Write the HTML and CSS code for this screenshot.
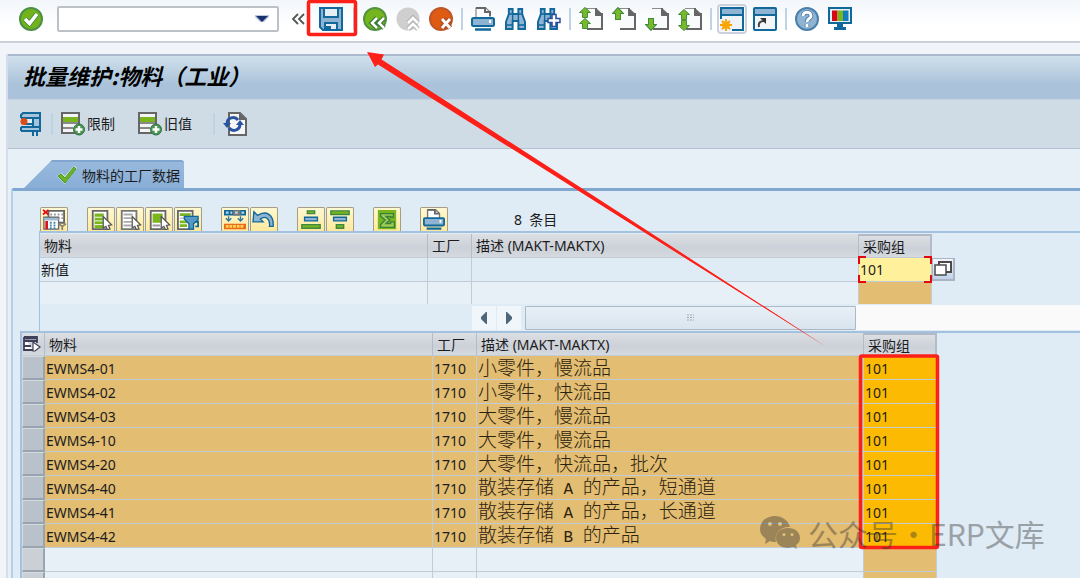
FILE: index.html
```html
<!DOCTYPE html>
<html lang="zh-CN">
<head>
<meta charset="utf-8">
<title>批量维护:物料（工业）</title>
<link rel="stylesheet" href="styles.css">
</head>
<body>
<svg class="defs" aria-hidden="true">
  <defs>
    <symbol id="page" viewBox="0 0 24 24"><path d="M8 1.500H18L23 7V22H8" fill="#f8fafb"/><path d="M7 1.500H17.500" stroke="#8c8c8c" fill="none"/><path d="M17 1V7H23V22H8" stroke="#666" stroke-width="2" fill="none"/><path d="M17 1L23.500 7V9H16Z" fill="#666"/></symbol>
    <symbol id="up" viewBox="0 0 12 12" preserveAspectRatio="none"><path d="M6 .5L11.500 6H8.500V11.500H3.500V6H.5Z" fill="#78b82a" stroke="#3f8b3a"/></symbol>
    <symbol id="down" viewBox="0 0 12 12" preserveAspectRatio="none"><path d="M6 11.500L11.500 6H8.500V.5H3.500V6H.5Z" fill="#78b82a" stroke="#3f8b3a"/></symbol>
    <symbol id="bino" viewBox="0 0 22 24" preserveAspectRatio="none"><path d="M4 2H8V7H14V2H18V7L21 15V22H14V14H8V22H1V15L4 7Z" fill="#8eb3d3" stroke="#11689b" stroke-width="2"/><path d="M4 7H8V14M18 7H14V14M1 18H8M14 18H21" fill="none" stroke="#11689b" stroke-width="1.500"/></symbol>
    <symbol id="sheetadd" viewBox="0 0 24 24"><path d="M1 1H18V21H1Z" fill="#f2f4f5" stroke="#666" stroke-width="2"/><path d="M2 5H17V10H2Z" fill="#7ab51d"/><path d="M1 11H18M1 16H12" stroke="#666" stroke-width="1.500"/><circle cx="18" cy="17.500" r="5.500" fill="#4b9350" stroke="#2f7346"/><path d="M18 14V21M14.500 17.500H21.500" stroke="#fff" stroke-width="2.500"/></symbol>
    <symbol id="cursor" viewBox="0 0 10 14"><path d="M1 1L9 9L6 9.500L7.500 13L5 13.500L3.500 10.500L1 12Z" fill="#fff" stroke="#555" stroke-width="1.200"/></symbol>
  </defs>
</svg>

<header class="command-bar">
  <button class="icon-button" aria-label="确认"><svg viewBox="0 0 24 24"><circle cx="12" cy="12" r="11" fill="#72b31d" stroke="#4b9045" stroke-width="2"/><path d="M6 12L10.500 16.500L18 7" fill="none" stroke="#3c8038" stroke-width="5"/><path d="M6 12L10.500 16.500L18 7" fill="none" stroke="#fff" stroke-width="3.500"/></svg></button>
  <div class="command-field">
    <input type="text" aria-label="命令">
    <button aria-label="命令列表"><svg viewBox="0 0 14 8"><path d="M0 0H14V2L9 7H5L0 2Z" fill="#b9c8dc"/><path d="M1 1H13L7 7Z" fill="#18306d"/></svg></button>
  </div>
  <button class="collapse" aria-label="折叠"><svg viewBox="0 0 14 12"><path d="M7 1L2 6L7 11M13 1L8 6L13 11" fill="none" stroke="#555" stroke-width="1.800"/></svg></button>
  <button class="icon-button save" aria-label="保存"><svg viewBox="0 0 24 24"><path d="M1 1H23V23H4L1 20Z" fill="#8eb3d3" stroke="#11689b" stroke-width="2"/><path d="M5 1H19V10H5Z" fill="#e5edf5" stroke="#11689b" stroke-width="2"/><path d="M6 16H18V23H6Z" fill="#e5edf5" stroke="#11689b" stroke-width="2"/><path d="M7 19H12V22H7Z" fill="#11689b"/></svg></button>
  <span class="separator"></span>
  <div class="icon-group">
    <button class="icon-button" aria-label="返回"><svg viewBox="0 0 24 24"><circle cx="12" cy="12" r="11" fill="#75b51e" stroke="#51933f" stroke-width="2"/><path d="M14 11L9 16L14 21M21 11L16 16L21 21" fill="none" stroke="#357c35" stroke-width="5"/><path d="M14 11L9 16L14 21M21 11L16 16L21 21" fill="none" stroke="#fff" stroke-width="2.500"/></svg></button>
    <button class="icon-button" aria-label="退出"><svg viewBox="0 0 24 24"><circle cx="12" cy="12" r="11.500" fill="#cfcfcf"/><path d="M12 16L17 11L22 16M12 22L17 17L22 22" fill="none" stroke="#b5b5b5" stroke-width="5"/><path d="M12 16L17 11L22 16M12 22L17 17L22 22" fill="none" stroke="#fff" stroke-width="2.500"/></svg></button>
    <button class="icon-button" aria-label="取消"><svg viewBox="0 0 24 24"><circle cx="12" cy="12" r="11" fill="#df5a13" stroke="#bd5728" stroke-width="2"/><path d="M13 12L21 21M21 12L13 21" stroke="#a9451f" stroke-width="5.500"/><path d="M13 12L21 21M21 12L13 21" stroke="#fff" stroke-width="3"/></svg></button>
  </div>
  <span class="separator"></span>
  <div class="icon-group">
    <button class="icon-button" aria-label="打印"><svg viewBox="0 0 24 24"><path d="M5 10V1H15L19 5V10" fill="#f8fafb" stroke="#888" stroke-width="1.200"/><path d="M5 1H14V5H19V9" fill="none" stroke="#666" stroke-width="2"/><rect x="1" y="11" width="22" height="8" rx="1.500" fill="#8eb3d3" stroke="#11689b" stroke-width="2"/><path d="M18 13H20V16H18Z" fill="#fff"/><path d="M4 22.500H20" stroke="#11689b" stroke-width="2.500"/></svg></button>
    <button class="icon-button" aria-label="查找"><svg viewBox="0 0 24 24"><use href="#bino" x="1" width="21" height="24"/></svg></button>
    <button class="icon-button" aria-label="继续查找"><svg viewBox="0 0 24 24"><use href="#bino" width="21" height="24"/><path d="M15 7.500H19V11.500H23V15.500H19V19.500H15V15.500H11V11.500H15Z" fill="#fff" stroke="#2c4c9b" stroke-width="1.500"/></svg></button>
  </div>
  <span class="separator"></span>
  <div class="icon-group">
    <button class="icon-button" aria-label="第一页"><svg viewBox="0 0 24 24"><use href="#page" width="24" height="24"/><use href="#up" width="12" height="11"/><use href="#up" y="11" width="12" height="11"/></svg></button>
    <button class="icon-button" aria-label="上一页"><svg viewBox="0 0 24 24"><use href="#page" width="24" height="24"/><use href="#up" width="12" height="13"/></svg></button>
    <button class="icon-button" aria-label="下一页"><svg viewBox="0 0 24 24"><use href="#page" width="24" height="24"/><use href="#down" y="11" width="12" height="13"/></svg></button>
    <button class="icon-button" aria-label="最后一页"><svg viewBox="0 0 24 24"><use href="#page" width="24" height="24"/><use href="#up" y="2" width="12" height="11"/><use href="#down" y="13" width="12" height="11"/></svg></button>
  </div>
  <span class="separator"></span>
  <div class="icon-group">
    <button class="icon-button active" aria-label="新建会话"><svg viewBox="0 0 24 24"><rect x="1" y="1" width="22" height="22" fill="#eef3f8" stroke="#11689b" stroke-width="2"/><path d="M2 2H22V7H2Z" fill="#8eb3d3"/><path d="M1 8H23" stroke="#11689b" stroke-width="2"/><path d="M0 12H12V24H0Z" fill="#eef3f8"/><path d="M6 12V24M0 18H12M2 14L10 22M10 14L2 22" stroke="#f6a000" stroke-width="1.800"/><circle cx="6" cy="18" r="3.700" fill="#fca600"/></svg></button>
    <button class="icon-button" aria-label="创建快捷方式"><svg viewBox="0 0 24 24"><rect x="1" y="1" width="22" height="22" rx="1" fill="#f4f5f6" stroke="#11689b" stroke-width="2"/><path d="M2 2H22V7H2Z" fill="#8eb3d3"/><path d="M1 8H23" stroke="#11689b" stroke-width="2"/><path d="M6 20C5 16 7 14 11 14" fill="none" stroke="#444" stroke-width="2"/><path d="M7 11H13V17Z" fill="#333"/></svg></button>
  </div>
  <span class="separator"></span>
  <div class="icon-group">
    <button class="icon-button" aria-label="帮助"><svg viewBox="0 0 24 24"><circle cx="12" cy="12" r="11" fill="#8eb3d3" stroke="#4b80aa" stroke-width="2"/><path d="M8 9C8 4 16 4 16 9C16 12 12 11 12 15M12 17V20" fill="none" stroke="#4b80aa" stroke-width="4.500"/><path d="M8 9C8 4 16 4 16 9C16 12 12 11 12 15M12 17V20" fill="none" stroke="#fff" stroke-width="2.800"/></svg></button>
    <button class="icon-button" aria-label="布局菜单"><svg viewBox="0 0 24 24"><rect x="1" y="1" width="22" height="15" fill="#e5f0f6" stroke="#11689b" stroke-width="2"/><path d="M4 3.500H9.500V14H4Z" fill="#d60a12"/><path d="M9.500 3.500H15V14H9.500Z" fill="#7ab51d"/><path d="M15 3.500H20.500V14H15Z" fill="#137ebd"/><path d="M9 17H15V20H18V23H6V20H9Z" fill="#11689b"/></svg></button>
  </div>
</header>

<main class="window">
  <h1 class="title">批量维护:物料（工业）</h1>

  <div class="app-bar">
    <button class="icon-button" aria-label="批量维护"><svg viewBox="0 0 24 24"><path d="M2 3L4 1H21V19H2V15H14V5H2Z" fill="#a5c3dd"/><path d="M6 6H13V12H6Z" fill="#e5eef5"/><path d="M2 6V3L4 1H21V19M14 6V14M2 6H21M5 12H14M2 15H21M2 19H21V15M2 15V19M14 19V24M18 19V24" fill="none" stroke="#11689b" stroke-width="2"/><circle cx="5" cy="9.500" r="3.500" fill="#df4b16"/></svg></button>
    <span class="separator"></span>
    <button class="text-button"><svg viewBox="0 0 24 24"><use href="#sheetadd"/></svg>限制</button>
    <button class="text-button"><svg viewBox="0 0 24 24"><use href="#sheetadd"/></svg>旧值</button>
    <span class="separator"></span>
    <button class="icon-button" aria-label="刷新"><svg viewBox="0 0 24 24"><path d="M6 1H17L23 7V23H6Z" fill="#f4f6f7" stroke="#666" stroke-width="2"/><path d="M16 0V8H24Z" fill="#666"/><path d="M4 12C4 5 12 4 15 8M17 12C17 19 9 20 6 16" fill="none" stroke="#2853a0" stroke-width="3"/><path d="M0 11H8L4 16ZM13 13H21L17 8Z" fill="#2853a0"/></svg></button>
  </div>

  <div class="tabs" role="tablist">
    <button class="tab" role="tab" aria-selected="true"><svg viewBox="0 0 20 18"><path d="M0 10L4 7L8 10L17 0L20 2L8 18Z" fill="#dce8c9"/><path d="M1 10L4 8L8 12L17 1L19 3L8 17Z" fill="#6ab520" stroke="#489636"/></svg>物料的工厂数据</button>
  </div>

  <section class="pane">
    <div class="grid-bar">
      <div class="tool-group">
        <button class="tool" aria-label="显示字段"><svg viewBox="0 0 28 24"><path d="M8 2H25V15H8Z" fill="#fff" stroke="#666" stroke-width="2"/><path d="M10 6H24M10 10H24" stroke="#999" stroke-width="2" stroke-dasharray="2 2"/><path d="M2 1L8 6M8 1L2 6" stroke="#e30d13" stroke-width="2"/><path d="M3 9H19V22H3Z" fill="#fff" stroke="#666" stroke-width="1.500"/><path d="M3 11H19" stroke="#9ebbd0" stroke-width="3"/><path d="M6 13V22" stroke="#d9141a" stroke-width="3"/><path d="M10.500 14V22M14.500 14V22" stroke="#3c83ad" stroke-width="2" stroke-dasharray="2 1"/><path d="M19 16L23 19L27 16M23 18V23" fill="none" stroke="#8a8570" stroke-width="2"/></svg></button>
      </div>
      <div class="tool-group">
        <button class="tool" aria-label="全选"><svg viewBox="0 0 28 24"><path d="M5 2H21V22H5Z" fill="#fff" stroke="#666" stroke-width="2"/><path d="M7 5H17V21H7Z" fill="#7ab51d"/><path d="M7 9H19M7 13H19M7 17H19" stroke="#fff"/><use href="#cursor" x="15" y="7" width="12" height="16"/></svg></button>
        <button class="tool" aria-label="取消全选"><svg viewBox="0 0 28 24"><path d="M5 2H21V22H5Z" fill="#fff" stroke="#777" stroke-width="2"/><path d="M7 6H17M7 10H16M7 14H16M7 18H16" stroke="#aaa" stroke-width="2"/><use href="#cursor" x="15" y="7" width="12" height="16"/></svg></button>
        <button class="tool" aria-label="选择块"><svg viewBox="0 0 28 24"><path d="M5 2H21V22H5Z" fill="#fff" stroke="#666" stroke-width="2"/><path d="M7 5H18V15H7Z" fill="#7ab51d"/><path d="M7 18H15" stroke="#999" stroke-width="2"/><use href="#cursor" x="15" y="7" width="12" height="16"/></svg></button>
        <button class="tool" aria-label="过滤"><svg viewBox="0 0 28 24"><path d="M3 2H19V22H3Z" fill="#fff" stroke="#666" stroke-width="2"/><path d="M5 6H17M5 14H13M5 18H13" stroke="#7ab51d" stroke-width="3"/><path d="M5 10H13" stroke="#999"/><path d="M10 8H25V12L20 16V22H15V16L10 11Z" fill="#5898c4" stroke="#11689b" stroke-width="1.500"/><path d="M22 14H25V19H22" fill="none" stroke="#11689b" stroke-width="2"/></svg></button>
      </div>
      <div class="tool-group">
        <button class="tool" aria-label="交换"><svg viewBox="0 0 28 24"><path d="M2 1H26V7H2Z" fill="#11689b"/><path d="M12 1H20V7H12Z" fill="#777"/><path d="M4 4H7M9 4H11M14 4H17M21 4H24" stroke="#bcd2e3" stroke-width="2.500"/><path d="M7 8V13M4 10L7 13L10 10M20 8V13M17 10L20 13L23 10" stroke="#33789f" stroke-width="1.500" fill="none"/><path d="M2 16H26V22H2Z" fill="#e96a20"/><path d="M4 19H24" stroke="#ffd74e" stroke-width="3" stroke-dasharray="3 1"/></svg></button>
        <button class="tool" aria-label="撤销"><svg viewBox="0 0 28 24"><path d="M3 3L7 7C16 1 25 6 24 19H20C21 10 15 7 10 11L13 14H2Z" fill="#8eb3d3" stroke="#11689b" stroke-width="1.500"/></svg></button>
      </div>
      <div class="tool-group">
        <button class="tool" aria-label="升序"><svg viewBox="0 0 28 24"><path d="M10 2H18V5H10ZM4 17H24V21H4Z" fill="#7ab51d" stroke="#3f8744" stroke-width="1.500"/><path d="M7 9H21V13H7Z" fill="#8eb3d3" stroke="#11689b" stroke-width="1.500"/></svg></button>
        <button class="tool" aria-label="降序"><svg viewBox="0 0 28 24"><path d="M4 2H24V6H4ZM10 17H18V21H10Z" fill="#7ab51d" stroke="#3f8744" stroke-width="1.500"/><path d="M7 9H21V13H7Z" fill="#8eb3d3" stroke="#11689b" stroke-width="1.500"/></svg></button>
      </div>
      <div class="tool-group">
        <button class="tool" aria-label="总计"><svg viewBox="0 0 28 24"><path d="M4 1H24V22H4Z" fill="#7ab51d"/><path d="M7 5H21V9H18V8H13L17 12L13 16H18V14H22V20H7V17L12 12L7 8Z" fill="#9fcb55" stroke="#35803b" stroke-width="1.500"/></svg></button>
      </div>
      <div class="tool-group">
        <button class="tool" aria-label="打印清单"><svg viewBox="0 0 28 24"><path d="M7 10V1H16L20 5V10" fill="#fff" stroke="#777" stroke-width="1.500"/><path d="M7 1H15V5H20" fill="none" stroke="#666" stroke-width="2"/><rect x="3" y="10" width="22" height="8" rx="1" fill="#8eb3d3" stroke="#11689b" stroke-width="2"/><path d="M20 12H22V15H20Z" fill="#fff"/><path d="M6 21.500H22" stroke="#11689b" stroke-width="2.500"/></svg></button>
      </div>
      <span class="count">8&nbsp; 条目</span>
    </div>

    <div class="new-values">
      <table class="grid">
        <colgroup><col class="c-material"><col class="c-plant"><col class="c-desc"><col class="c-group"></colgroup>
        <thead><tr><th>物料</th><th>工厂</th><th>描述 (MAKT-MAKTX)</th><th class="boxed">采购组</th></tr></thead>
        <tbody>
          <tr class="entry"><td>新值</td><td></td><td></td><td class="focus"><input type="text" value="101" aria-label="采购组新值"><button class="lookup" aria-label="搜索帮助"><svg viewBox="0 0 18 16"><path d="M5 1H17V11H5Z" fill="#fff" stroke="#4b4b4b" stroke-width="2"/><path d="M1 4H12V14H1Z" fill="#fff" stroke="#4b4b4b" stroke-width="1.500"/></svg></button></td></tr>
          <tr class="spare"><td></td><td></td><td></td><td class="tan"></td></tr>
        </tbody>
      </table>
      <div class="scroller">
        <button class="step" aria-label="向左滚动"><svg viewBox="0 0 8 12"><path d="M7 0V12H6L1 7V5L6 0Z" fill="#50677a"/></svg></button>
        <button class="step" aria-label="向右滚动"><svg viewBox="0 0 8 12"><path d="M1 0V12H2L7 7V5L2 0Z" fill="#50677a"/></svg></button>
        <div class="thumb"><svg viewBox="0 0 9 7"><path d="M1 1H8M1 3.500H8M1 6H8" stroke="#9aa9b7" stroke-dasharray="2 1"/></svg></div>
        <div class="track"></div>
      </div>
    </div>

    <div class="records">
      <table class="grid">
        <colgroup><col class="c-select"><col class="c-material"><col class="c-plant"><col class="c-desc"><col class="c-group"></colgroup>
        <thead><tr><th class="corner"><svg viewBox="0 0 18 16"><path d="M1 1H14V7M1 1V14H10M1 5H14M1 10H8" fill="#fff" stroke="#3d4058" stroke-width="1.800"/><path d="M1 2.500H14" stroke="#3d4058" stroke-width="2"/><path d="M10 6L17 11L12 15H10Z" fill="#fff" stroke="#3d4058" stroke-width="1.200"/></svg></th><th>物料</th><th>工厂</th><th>描述 (MAKT-MAKTX)</th><th class="boxed">采购组</th></tr></thead>
        <tbody>
          <tr><td class="selector"></td><td>EWMS4-01</td><td>1710</td><td class="desc">小零件，慢流品</td><td class="value">101</td></tr>
          <tr><td class="selector"></td><td>EWMS4-02</td><td>1710</td><td class="desc">小零件，快流品</td><td class="value">101</td></tr>
          <tr><td class="selector"></td><td>EWMS4-03</td><td>1710</td><td class="desc">大零件，慢流品</td><td class="value">101</td></tr>
          <tr><td class="selector"></td><td>EWMS4-10</td><td>1710</td><td class="desc">大零件，慢流品</td><td class="value">101</td></tr>
          <tr><td class="selector"></td><td>EWMS4-20</td><td>1710</td><td class="desc">大零件，快流品，批次</td><td class="value">101</td></tr>
          <tr><td class="selector"></td><td>EWMS4-40</td><td>1710</td><td class="desc">散装存储<span class="mono"> A </span>的产品，短通道</td><td class="value">101</td></tr>
          <tr><td class="selector"></td><td>EWMS4-41</td><td>1710</td><td class="desc">散装存储<span class="mono"> A </span>的产品，长通道</td><td class="value">101</td></tr>
          <tr><td class="selector"></td><td>EWMS4-42</td><td>1710</td><td class="desc">散装存储<span class="mono"> B </span>的产品</td><td class="value">101</td></tr>
          <tr class="blank"><td class="selector"></td><td></td><td></td><td></td><td class="tan"></td></tr>
          <tr class="blank"><td class="selector"></td><td></td><td></td><td></td><td class="tan"></td></tr>
        </tbody>
      </table>
    </div>
  </section>
</main>

<svg class="marks" viewBox="0 0 1080 578" aria-hidden="true">
  <rect x="308.500" y="1.500" width="47" height="33" rx="1.500" fill="none" stroke="#fd2019" stroke-width="3.500"/>
  <rect x="860.500" y="356" width="77" height="191.500" rx="1.500" fill="none" stroke="#fd2019" stroke-width="3.500"/>
  <path d="M367 52L384 54.500L381.500 59.500L600 200L825 346L598 203L379 63.500L375 67Z" fill="#fd2019"/>
  <path d="M380 59L825 346L378 64.500Z" fill="#fd2019"/>
</svg>

<div class="watermark">
  <svg viewBox="0 0 42 34"><path fill-rule="evenodd" d="M15 0C7 0 0 5 0 13C0 17 2 20 6 23L5 28L10 25C12 26 14 26 16 26C14 17 21 10 30 11C28 4 22 0 15 0ZM10 6A2 2 0 1 1 10 10A2 2 0 1 1 10 6ZM20 6A2 2 0 1 1 20 10A2 2 0 1 1 20 6Z"/><path fill-rule="evenodd" d="M28 12C21 12 16 16 16 22C16 28 21 32 28 32C30 32 32 31 33 31L37 33L36 29C39 27 40 25 40 22C40 16 35 12 28 12ZM24 17A1.600 1.600 0 1 1 24 20.200A1.600 1.600 0 1 1 24 17ZM32 17A1.600 1.600 0 1 1 32 20.200A1.600 1.600 0 1 1 32 17Z"/></svg>
  <span>公众号</span><span class="dot">·</span><span>ERP文库</span>
</div>
</body>
</html>
```
FILE: styles.css
```css
* { box-sizing: border-box; }

body {
  margin: 0;
  height: 100vh;
  overflow: hidden;
  position: relative;
  display: flex;
  flex-direction: column;
  background: #f1f5fa;
  color: #1c1c1c;
  font-family: "Noto Sans", "Noto Sans CJK SC", sans-serif;
  font-size: 14px;
}

button, input {
  margin: 0;
  padding: 0;
  border: 0;
  background: none;
  color: inherit;
  font: inherit;
}

svg { display: block; }
.defs { position: absolute; width: 0; height: 0; }

.icon-button { width: 24px; height: 24px; flex: none; }
.icon-button svg { width: 24px; height: 24px; }
.separator { width: 2px; height: 22px; margin: 0 8px; background: #bfd3e6; flex: none; }

/* Command bar */
.command-bar {
  flex: none;
  display: flex;
  align-items: center;
  height: 43px;
  padding: 0 19px 4px;
  border-bottom: 2px solid #cbcedb;
  background: linear-gradient(#f2f6fa, #fff 60%);
}
.command-field {
  display: flex;
  align-items: center;
  width: 222px;
  height: 26px;
  margin-left: 14px;
  border: 2px solid #bcc1c8;
  border-radius: 2px;
  background: #fff;
}
.command-field input { flex: 1; min-width: 0; height: 22px; }
.command-field button { width: 26px; }
.command-field svg { width: 14px; height: 8px; margin: 0 4px; }
.collapse { margin: 0 12px; }
.collapse svg { width: 14px; height: 12px; }
.save { width: 28px; }
.save svg { margin: 0 auto; }
.icon-group { display: flex; gap: 9px; }
.active { background: #f1f4f9; outline: 2px solid #cdd1df; outline-offset: 1px; border-radius: 1px; }

/* Window */
.window {
  flex: 1;
  display: flex;
  flex-direction: column;
  min-height: 0;
  margin-top: 11px;
  margin-left: 6px;
  border-left: 2px solid #d5deeb;
  background: #e8f0f7;
}
.title {
  flex: none;
  margin: 0;
  height: 45px;
  padding-left: 15px;
  border-top: 2px solid #aab9ce;
  background: linear-gradient(#d0e0ec, #abc3da 65%, #abc3da);
  font-family: "Noto Sans CJK SC", sans-serif;
  font-size: 22px;
  font-style: italic;
  font-weight: 700;
  line-height: 38px;
  color: #000;
}
.app-bar {
  flex: none;
  display: flex;
  align-items: center;
  height: 50px;
  padding-left: 11px;
  border-top: 1px solid #c5d2df;
  border-bottom: 1px solid #b3c3d1;
  background: #cfdce6;
}
.text-button { display: flex; align-items: center; gap: 2px; margin-right: 23px; line-height: 20px; }
.text-button svg { width: 24px; height: 24px; }
.text-button + .separator { margin-left: -2px; }

.tabs { flex: none; display: flex; align-items: flex-end; height: 39px; padding-left: 16px; }
.tab {
  display: flex;
  align-items: center;
  gap: 5px;
  height: 28px;
  padding: 0 4px 0 33px;
  border-top: 2px solid #80a6cf;
  border-radius: 0 3px 0 0;
  background: linear-gradient(#98b9dc, #88aed7);
  clip-path: polygon(28px 0, 100% 0, 100% 100%, 0 100%);
}
.tab svg { width: 20px; height: 18px; }

.pane {
  flex: 1;
  min-height: 0;
  margin-left: 3px;
  padding-left: 7px;
  border-top: 3px solid #7fa7d0;
  border-left: 2px solid #b5cfe6;
  border-radius: 3px 0 0 0;
  background: #dfebf5;
}

/* Grid toolbar */
.grid-bar { display: flex; align-items: flex-end; gap: 19px; height: 40px; padding-left: 20px; }
.tool-group { display: flex; gap: 1px; }
.tool {
  width: 28px;
  height: 24px;
  overflow: hidden;
  border: 1px solid #a59e85;
  border-bottom: 0;
  border-radius: 2px 2px 0 0;
  background: linear-gradient(#fff8d2, #ffe99b);
}
.tool svg { width: 26px; height: 22px; }
.count { margin-left: 47px; line-height: 22px; }

/* Tables */
.grid { width: min-content; border-spacing: 0; table-layout: fixed; line-height: 20px; }
.c-select { width: 23px; }
.c-material { width: 388px; }
.c-plant { width: 44px; }
.c-desc { width: 387px; }
.c-group { width: 73px; }
.grid th, .grid td {
  height: 24px;
  padding: 0 0 0 1px;
  border-right: 1px solid #c2ccd7;
  border-bottom: 1px solid #c2ccd7;
  text-align: left;
  font-weight: 400;
  white-space: nowrap;
}
.grid th {
  padding-left: 4px;
  border-right-color: #b3bcc8;
  background: linear-gradient(#dce0e3, #ccd0d8 60%, #d5dadf);
}
.grid .boxed { border-top: 2px solid #b1b9c7; border-right-width: 2px; line-height: 18px; }
.grid .tan { background: #e2bd72; }

.new-values { margin-left: 19px; border-top: 2px solid #a4c2df; border-left: 1px solid #a4c2df; padding-top: 1px; }
.entry td { background: #dfebf5; }
.spare td { height: 22px; border-bottom: 0; background: #e8f0f7; }
.grid .focus { position: relative; padding: 0 0 0 1px; background: #fff09c; }
.focus input { display: block; width: 70px; height: 22px; }
.focus::before {
  content: "";
  position: absolute;
  inset: -2px -1px -2px -1px;
  pointer-events: none;
  background:
    linear-gradient(#e30613, #e30613) 0 0 / 8px 2px,
    linear-gradient(#e30613, #e30613) 0 0 / 2px 8px,
    linear-gradient(#e30613, #e30613) 100% 0 / 8px 2px,
    linear-gradient(#e30613, #e30613) 100% 0 / 2px 8px,
    linear-gradient(#e30613, #e30613) 0 100% / 8px 2px,
    linear-gradient(#e30613, #e30613) 0 100% / 2px 8px,
    linear-gradient(#e30613, #e30613) 100% 100% / 8px 2px,
    linear-gradient(#e30613, #e30613) 100% 100% / 2px 8px;
  background-repeat: no-repeat;
}
.lookup {
  position: absolute;
  left: 100%;
  top: 0;
  width: 23px;
  height: 23px;
  margin-left: 1px;
  border: 1px solid #aab4c4;
  border-right-width: 2px;
  border-bottom-width: 2px;
  background: linear-gradient(#f2f5fa, #c0d3ea);
}
.lookup svg { width: 18px; height: 16px; margin: 0 1px; }

.scroller { display: flex; align-items: center; height: 27px; padding-left: 432px; }
.step { display: grid; place-items: center; width: 24px; height: 24px; margin-right: 1px; background: #f1f6fa; }
.step svg { width: 8px; height: 12px; }
.thumb {
  display: grid;
  place-items: center;
  width: 331px;
  height: 24px;
  margin-left: 3px;
  border: 1px solid #aab9c5;
  border-radius: 1px;
  background: linear-gradient(#e8eff6, #d9e4ee);
}
.thumb svg { width: 9px; height: 7px; }
.track { flex: 1; height: 25px; background: #fafafa; }

.records { border-top: 2px solid #a4c2df; border-left: 2px solid #a4c2df; }
.records thead th { height: 23px; padding-top: 2px; }
.records td { padding-top: 2px; background: #e2bd72; }
.records thead .corner { padding: 0 0 0 1px; }
.corner svg { width: 18px; height: 16px; }
.records .selector {
  border: 1px solid #d6dbe0;
  border-right: 2px solid #98a4b0;
  border-bottom: 2px solid #98a4b0;
  background: #b9c2cb;
}
.records .value { background: #fcbb02; }
.records .desc { padding-top: 0; font-size: 19px; font-weight: 300; color: #2e2210; }
.mono { font-family: "Liberation Mono", monospace; font-size: 16px; line-height: 1; white-space: pre; }
.records .blank td { background: #e8f0f7; }
.records .blank .selector { background: #cbcfd6; }
.records .blank .tan { background: #e2bd72; }

/* Overlays */
.marks { position: absolute; left: 0; top: 0; width: 1080px; height: 578px; pointer-events: none; }
.watermark {
  position: absolute;
  left: 760px;
  top: 514px;
  display: flex;
  align-items: center;
  color: #333;
  opacity: 0.4;
  font-family: "Noto Sans CJK SC", sans-serif;
  font-size: 30px;
  line-height: 38px;
  white-space: nowrap;
  pointer-events: none;
}
.watermark svg { width: 42px; height: 34px; margin-right: 6px; fill: #333; }
.dot { width: 31px; text-align: center; }
```
